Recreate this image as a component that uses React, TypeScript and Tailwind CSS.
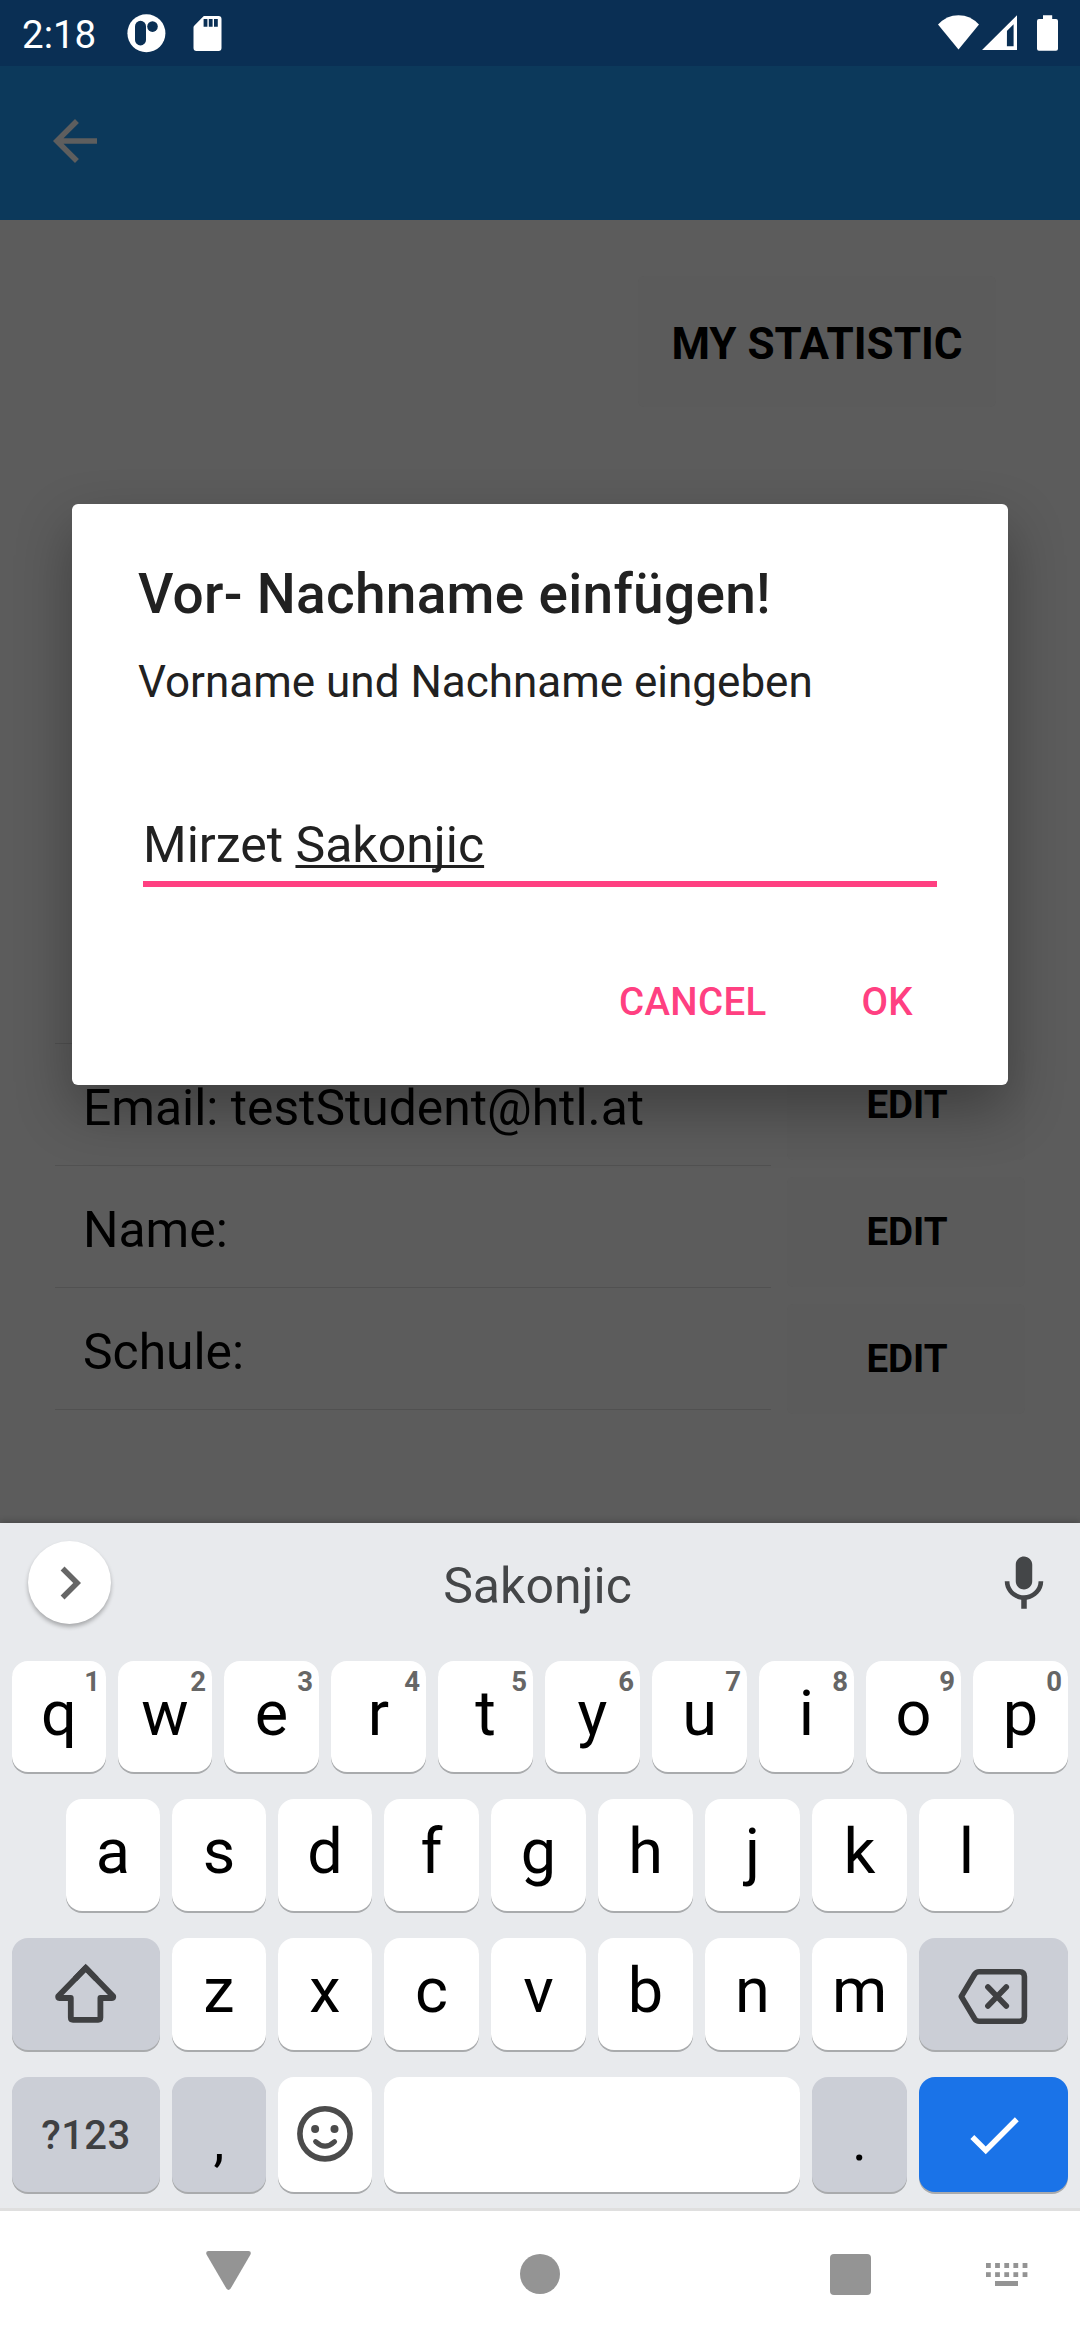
import type { ReactNode } from "react";

type KeyDef = {
  id: string;
  label?: string;
  hint?: string;
  width: string;
  tone?: "light" | "grey" | "blue";
  text?: string;
  icon?: ReactNode;
};

const letterText = "text-[63px] leading-[105px] text-black";

const tones = {
  light: "bg-white",
  grey: "bg-[#cbced6]",
  blue: "bg-[#1a73e8]",
};

function Key({ label, hint, width, tone = "light", text = letterText, icon, height }: KeyDef & { height: string }) {
  return (
    <button
      className={`relative flex shrink-0 items-start justify-center rounded-[16px] shadow-[0_2px_0_#a9abad] ${width} ${height} ${tones[tone]}`}
    >
      {label && <span className={`block ${text}`}>{label}</span>}
      {hint && (
        <span className="absolute top-[5px] right-[6px] text-[27.5px] leading-[32px] font-bold text-[#666666]">{hint}</span>
      )}
      {icon}
    </button>
  );
}

const letters = (chars: string, narrow: number, hints = ""): KeyDef[] =>
  chars.split("").map((c, i) => ({
    id: c,
    label: c,
    hint: hints[i],
    width: i < narrow ? "w-[94px]" : "w-[95px]",
  }));

const ShiftIcon = (
  <svg className="block" width="148" height="112" viewBox="12 1938 148 112" fill="none" stroke="#3f4042" strokeWidth="5.8">
    <path
      strokeLinejoin="round"
      d="M85.7 1968L58.2 1996.3Q57.6 1998 59.4 1998H70.8V2017.5Q70.8 2019.8 73 2019.8H98.2Q100.4 2019.8 100.4 2017.5V1998H112Q113.8 1998 113.2 1996.3Z"
    />
    <path strokeLinejoin="miter" d="M75 1979L85.7 1968L96.4 1979" />
  </svg>
);

const BackspaceIcon = (
  <svg
    className="block"
    width="149"
    height="112"
    viewBox="919 1938 149 112"
    fill="none"
    stroke="#3f4042"
    strokeWidth="5.6"
    strokeLinejoin="round"
    strokeLinecap="round"
  >
    <path d="M961.3 1996.5L974.6 1974.3Q976.2 1971.8 979.2 1971.8H1019.6Q1024.4 1971.8 1024.4 1976.6V2016.4Q1024.4 2021.2 1019.6 2021.2H979.2Q976.2 2021.2 974.6 2018.7Z" />
    <path d="M987.9 1987L1006.3 2006M1006.3 1987L987.9 2006" />
  </svg>
);

const EmojiIcon = (
  <svg className="block" width="94" height="115" viewBox="278 2077 94 115" fill="none" stroke="#4b4b4b" strokeLinecap="round">
    <circle cx="325" cy="2133.8" r="25.1" strokeWidth="5.6" />
    <circle cx="315.1" cy="2129" r="4" fill="#4b4b4b" stroke="none" />
    <circle cx="334.5" cy="2129" r="4" fill="#4b4b4b" stroke="none" />
    <path d="M315.6 2141.6Q325 2150.6 334.6 2141.6" strokeWidth="5" />
  </svg>
);

const CheckIcon = (
  <svg className="self-center" width="66" height="66" viewBox="0 0 24 24" fill="#ffffff">
    <path d="M9 16.17L4.83 12l-1.42 1.41L9 19 21 7l-1.41-1.41z" />
  </svg>
);

const row1 = letters("qwertyuiop", 2, "1234567890");
const row2 = letters("asdfghjkl", 3);
const row3: KeyDef[] = [
  { id: "shift", width: "w-[148px]", tone: "grey", icon: ShiftIcon },
  ...letters("zxcvbnm", 2),
  { id: "backspace", width: "w-[149px]", tone: "grey", icon: BackspaceIcon },
];
const row4: KeyDef[] = [
  {
    id: "symbols",
    label: "?123",
    width: "w-[148px]",
    tone: "grey",
    text: "text-[40px] leading-[118px] font-medium tracking-[0.4px] text-[#3f4042]",
  },
  { id: "comma", label: ",", width: "w-[94px]", tone: "grey", text: "text-[55px] leading-[128px] text-black" },
  { id: "emoji", width: "w-[94px]", icon: EmojiIcon },
  { id: "space", width: "w-[416px]" },
  { id: "period", label: ".", width: "w-[95px]", tone: "grey", text: "text-[55px] leading-[128px] text-black" },
  { id: "enter", width: "w-[149px]", tone: "blue", icon: CheckIcon },
];

function KeyRow({ keys, height, className }: { keys: KeyDef[]; height: string; className: string }) {
  return (
    <div className={`flex gap-[12px] ${className}`}>
      {keys.map((k) => (
        <Key key={k.id} {...k} height={height} />
      ))}
    </div>
  );
}

function StatusBar() {
  return (
    <div className="flex h-[66px] shrink-0 items-start bg-[#0a2f54] text-white">
      <span className="w-[106px] pl-[22px] text-[38.5px] leading-[70px]">2:18</span>
      <svg className="mt-[14px] ml-[21px]" width="39" height="39" viewBox="127 14 39 39">
        <circle cx="146.4" cy="33.3" r="19" fill="#fff" />
        <rect x="135" y="20.8" width="11" height="24.6" rx="5.5" fill="#0a2f54" />
        <circle cx="152.5" cy="26.6" r="5.3" fill="#0a2f54" />
      </svg>
      <svg className="mt-[15px] ml-[26px]" width="30" height="37" viewBox="192 15 30 37">
        <path
          fill="#fff"
          fillRule="evenodd"
          d="M204 16H218.5a3 3 0 0 1 3 3V48a3 3 0 0 1-3 3H196.500a3 3 0 0 1-3-3V27.500Q193.500 26.500 194.200 25.800L203 16.800Q203.600 16 204 16ZM203.600 19V26.700H207.400V19ZM208.800 19V26.700H212.600V19ZM214 19V26.700H217.800V19Z"
        />
      </svg>
      <div className="flex-1" />
      <svg className="mt-[14px] mr-[20px]" width="124" height="38" viewBox="936 14 124 38" fill="#fff">
        <path d="M938 24.600Q946.500 15.200 958.500 15.200T979 24.600L958.500 49.600Z" />
        <path fillRule="evenodd" d="M982 50L1017 15.200V50ZM1006 46.200H1013.600V24.200L1006.600 31.200Z" />
        <path d="M1006 30V50H1006.900V30Z" />
        <path d="M1043 19V15.300H1052.200V19H1056a2 2 0 0 1 2 2V48.700a2 2 0 0 1-2 2H1039a2 2 0 0 1-2-2V21a2 2 0 0 1 2-2Z" />
      </svg>
    </div>
  );
}

const profile = ["Email: testStudent@htl.at", "Name:", "Schule:"];

function ProfileScreen() {
  return (
    <div className="flex h-[1303px] shrink-0 flex-col bg-[#5c5c5c] text-black">
      <div className="flex justify-end pt-[56px] pr-[84px]">
        <button className="flex h-[131px] w-[358px] items-start justify-center rounded-[6px] bg-[#5b5b5b] text-[44px] leading-[137px] font-bold whitespace-nowrap">
          MY STATISTIC
        </button>
      </div>
      <div className="mt-[636px] flex items-start">
        <div className="ml-[55px] w-[716px] border-t border-[#515151]">
          {profile.map((line) => (
            <div key={line} className="h-[122px] border-b border-[#515151] pl-[28px] text-[49.8px] leading-[128px]">
              {line}
            </div>
          ))}
        </div>
        <div className="mt-[7px] ml-[16px] flex flex-col gap-[17px]">
          {profile.map((line) => (
            <button
              key={line}
              className="h-[110px] w-[238px] rounded-[6px] bg-[#5b5b5b] pl-[2px] text-[38.5px] leading-[110px] font-bold"
            >
              EDIT
            </button>
          ))}
        </div>
      </div>
    </div>
  );
}

function NameDialog() {
  return (
    <div className="absolute top-[504px] left-[72px] flex h-[581px] w-[936px] flex-col rounded-[6px] bg-white px-[66px] text-[#212121] shadow-[0_24px_56px_rgba(0,0,0,0.32)]">
      <h2 className="mt-[58px] text-[55px] leading-[65px] font-medium tracking-[0.28px]">Vor- Nachname einfügen!</h2>
      <p className="mt-[28px] text-[44px] leading-[54px]">Vorname und Nachname eingeben</p>
      <div className="mt-[105px] ml-[5px] flex h-[73px] w-[794px] border-b-[6px] border-[#ff4081] text-[50px] leading-[62px]">
        <span className="whitespace-pre">Mirzet </span>
        <span className="underline decoration-[3px] underline-offset-[3px] [text-decoration-skip-ink:none]">Sakonjic</span>
      </div>
      <div className="mt-[88px] flex justify-end pr-[29px] text-[38.5px] leading-[54px] font-medium tracking-[0.3px] text-[#ff4081]">
        <button className="mr-[95px]">CANCEL</button>
        <button>OK</button>
      </div>
    </div>
  );
}

function Keyboard() {
  return (
    <div className="flex h-[688px] shrink-0 flex-col border-b-[3px] border-[#dfdfdf] bg-[#e8eaed] shadow-[0_-2px_6px_rgba(0,0,0,0.2)]">
      <div className="flex h-[138px] items-start justify-between pr-[23px] pl-[28px]">
        <button className="mt-[18px] flex h-[83px] w-[83px] items-center justify-center rounded-full bg-white shadow-[0_3px_4px_rgba(0,0,0,0.28)]">
          <svg width="66" height="66" viewBox="0 0 24 24" fill="#666666">
            <path d="M10 6L8.590 7.410 13.170 12l-4.580 4.590L10 18l6-6z" />
          </svg>
        </button>
        <span className="pt-[32px] pr-[27px] text-[50px] leading-[62px] text-[#444648]">Sakonjic</span>
        <svg className="mt-[28px]" width="66" height="66" viewBox="0 0 24 24" fill="#444648">
          <path d="M12 14c1.660 0 2.990-1.340 2.990-3L15 5c0-1.660-1.340-3-3-3S9 3.340 9 5v6c0 1.660 1.340 3 3 3zm5.300-3c0 3-2.540 5.100-5.300 5.100S6.700 14 6.700 11H5c0 3.410 2.720 6.230 6 6.720V21h2v-3.280c3.280-.480 6-3.300 6-6.720h-1.700z" />
        </svg>
      </div>
      <KeyRow keys={row1} height="h-[111px]" className="pl-[12px]" />
      <KeyRow keys={row2} height="h-[112px]" className="mt-[27px] pl-[66px]" />
      <KeyRow keys={row3} height="h-[112px]" className="mt-[27px] pl-[12px]" />
      <KeyRow keys={row4} height="h-[115px]" className="mt-[27px] pl-[12px]" />
    </div>
  );
}

const dotColumns = [986, 995.1, 1004.3, 1013.4, 1022.6];

function NavBar() {
  return (
    <div className="flex h-[129px] shrink-0 items-start bg-white">
      <svg className="mt-[39px] ml-[206px]" width="46" height="42" viewBox="206 2250 46 42" fill="#949494">
        <path d="M208.500 2251H248.500Q252 2251.300 250.200 2255L230.600 2288.600Q228.500 2291.500 226.400 2288.600L206.800 2255Q205 2251.300 208.500 2251Z" />
      </svg>
      <div className="mt-[43px] ml-[268px] h-[40px] w-[40px] rounded-full bg-[#949494]" />
      <div className="mt-[43px] ml-[270px] h-[41px] w-[41px] rounded-[4px] bg-[#949494]" />
      <svg className="mt-[51px] ml-[115px]" width="42" height="25" viewBox="986 2262 42 25" fill="#949494">
        {dotColumns.map((x) => (
          <g key={x}>
            <rect x={x} y="2263" width="4.800" height="5" />
            <rect x={x} y="2272.200" width="4.800" height="4.800" />
          </g>
        ))}
        <rect x="995" y="2281" width="23" height="5" />
      </svg>
    </div>
  );
}

export default function App() {
  return (
    <div className="relative flex h-[2340px] w-[1080px] flex-col overflow-hidden bg-white font-['Roboto',sans-serif]">
      <StatusBar />
      <div className="h-[154px] shrink-0 bg-[#0c395b] pt-[42px] pl-[42px]">
        <svg width="66" height="66" viewBox="0 0 24 24" fill="#5e5e5e">
          <path d="M20 11H7.830l5.590-5.590L12 4l-8 8 8 8 1.410-1.410L7.830 13H20v-2z" />
        </svg>
      </div>
      <ProfileScreen />
      <Keyboard />
      <NavBar />
      <NameDialog />
    </div>
  );
}
